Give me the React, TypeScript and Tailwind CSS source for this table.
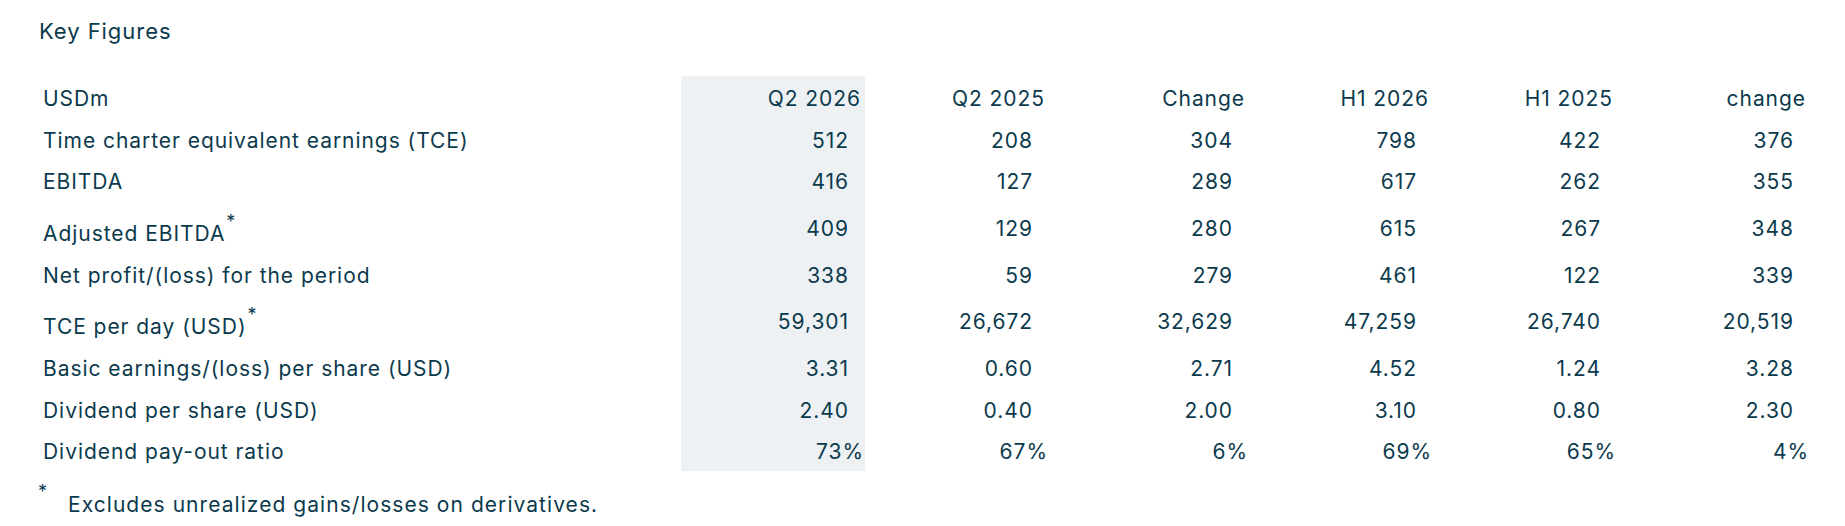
interface Row {
  label: string;
  note?: boolean;
  percent?: boolean;
  values: string[];
}

const headers = ['Q2 2026', 'Q2 2025', 'Change', 'H1 2026', 'H1 2025', 'change'];

const rows: Row[] = [
  { label: 'Time charter equivalent earnings (TCE)', values: ['512', '208', '304', '798', '422', '376'] },
  { label: 'EBITDA', values: ['416', '127', '289', '617', '262', '355'] },
  { label: 'Adjusted EBITDA', note: true, values: ['409', '129', '280', '615', '267', '348'] },
  { label: 'Net profit/(loss) for the period', values: ['338', '59', '279', '461', '122', '339'] },
  { label: 'TCE per day (USD)', note: true, values: ['59,301', '26,672', '32,629', '47,259', '26,740', '20,519'] },
  { label: 'Basic earnings/(loss) per share (USD)', values: ['3.31', '0.60', '2.71', '4.52', '1.24', '3.28'] },
  { label: 'Dividend per share (USD)', values: ['2.40', '0.40', '2.00', '3.10', '0.80', '2.30'] },
  { label: 'Dividend pay-out ratio', percent: true, values: ['73%', '67%', '6%', '69%', '65%', '4%'] },
];

function Star() {
  return <sup className="ml-px text-[18px] -top-[13.5px]">*</sup>;
}

export default function App() {
  return (
    <div className="min-h-screen bg-white pl-[38px] pt-[18px] font-['Inter',sans-serif] text-[#0c3a4d] tracking-[0.95px]">
      <h2 className="pl-px text-[22px] leading-[26px]">Key Figures</h2>

      <table className="mt-[32px] w-[1772px] table-fixed text-[21px] leading-[24px]">
        <colgroup>
          <col className="w-[643px]" />
          <col className="w-[184px]" />
          <col className="w-[184px]" />
          <col className="w-[200px]" />
          <col className="w-[184px]" />
          <col className="w-[184px]" />
          <col className="w-[193px]" />
        </colgroup>
        <thead>
          <tr className="h-[41.67px]">
            <th className="pl-[5px] pt-[4.5px] text-left align-middle font-normal">USDm</th>
            {headers.map((h, i) => (
              <th
                key={h}
                className={`pr-[4px] pt-[4.5px] text-right align-middle font-normal ${i === 0 ? 'bg-[#edf1f4]' : ''}`}
              >
                {h}
              </th>
            ))}
          </tr>
        </thead>
        <tbody>
          {rows.map(row => (
            <tr key={row.label} className={row.note ? 'h-[51.67px]' : 'h-[41.67px]'}>
              <td className={`pl-[5px] text-left align-middle ${row.note ? 'pt-[14.5px]' : 'pt-[4.5px]'}`}>
                {row.label}
                {row.note && <Star />}
              </td>
              {row.values.map((v, i) => (
                <td
                  key={i}
                  className={`pt-[4.5px] text-right align-middle ${row.percent ? 'pr-[1px]' : 'pr-[16px]'} ${
                    i === 0 ? 'bg-[#edf1f4]' : ''
                  }`}
                >
                  {v}
                </td>
              ))}
            </tr>
          ))}
        </tbody>
      </table>

      <p className="mt-[22px] text-[21px] leading-[24px] tracking-[1.05px]">
        <sup className="inline-block w-[30px] text-[18px] -top-[13.5px]">*</sup>
        Excludes unrealized gains/losses on derivatives.
      </p>
    </div>
  );
}
